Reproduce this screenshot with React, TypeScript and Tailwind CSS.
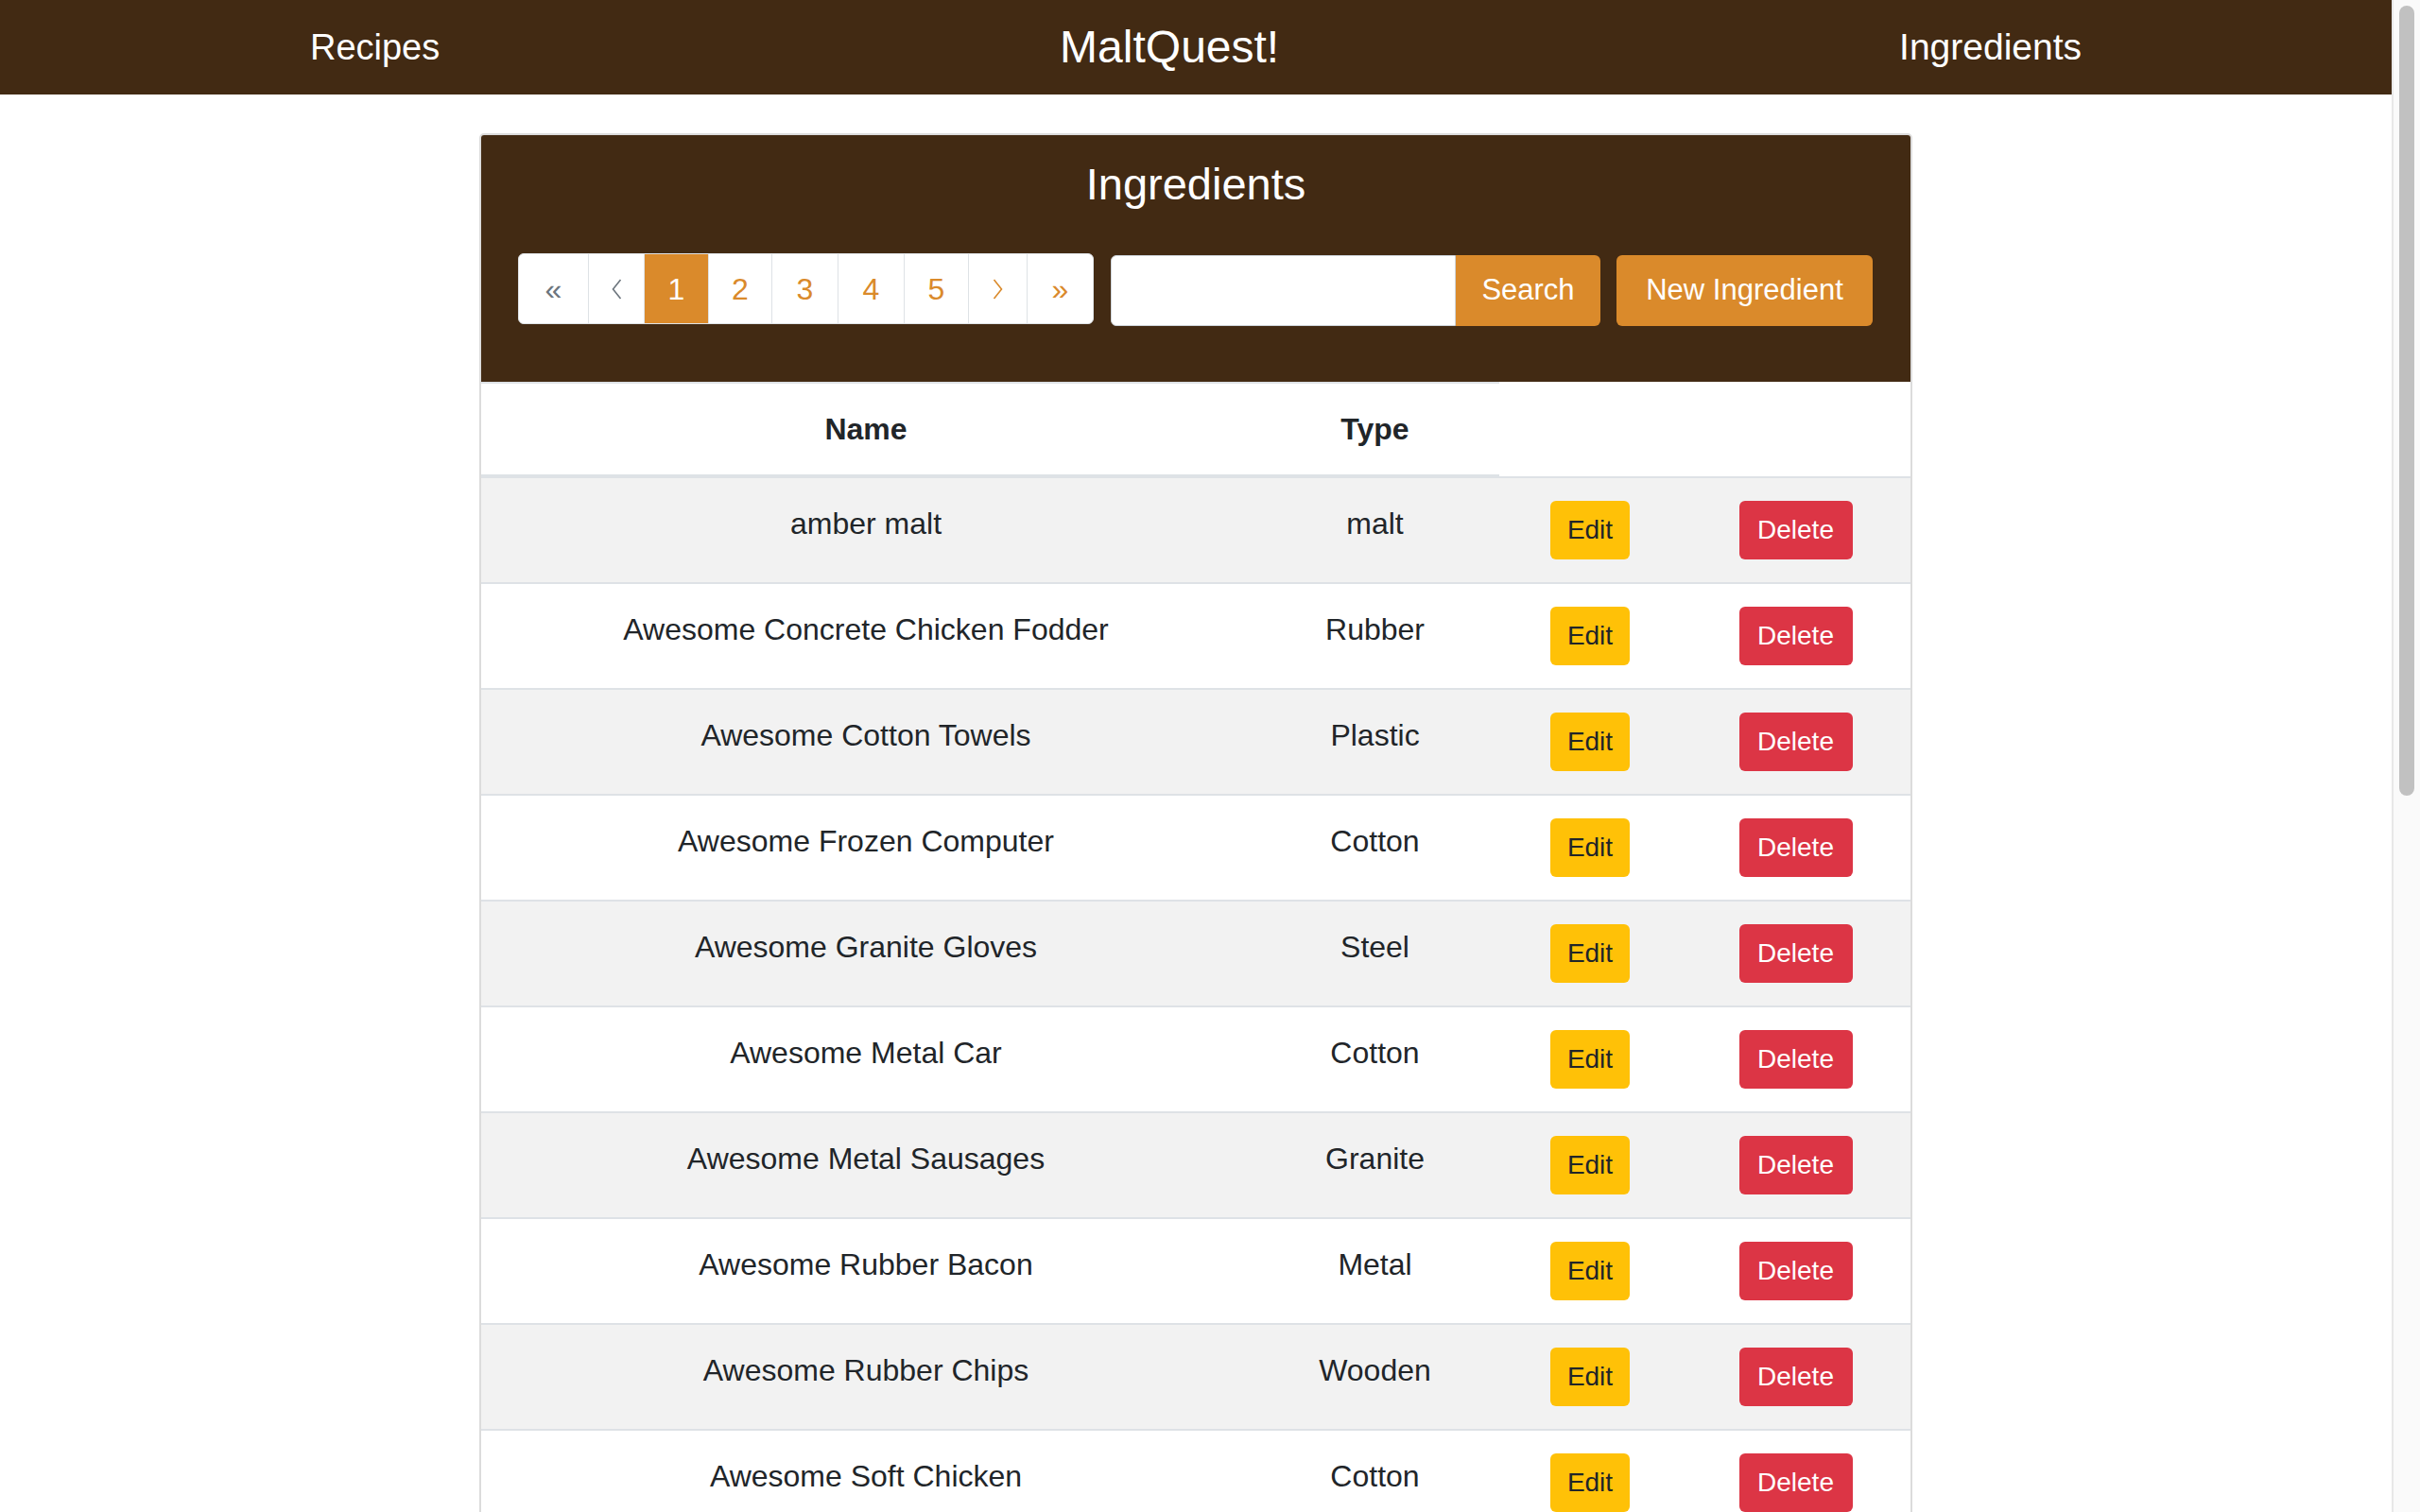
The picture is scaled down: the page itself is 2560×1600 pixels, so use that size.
import React from "react";

const rows = [
  { name: "amber malt", type: "malt" },
  { name: "Awesome Concrete Chicken Fodder", type: "Rubber" },
  { name: "Awesome Cotton Towels", type: "Plastic" },
  { name: "Awesome Frozen Computer", type: "Cotton" },
  { name: "Awesome Granite Gloves", type: "Steel" },
  { name: "Awesome Metal Car", type: "Cotton" },
  { name: "Awesome Metal Sausages", type: "Granite" },
  { name: "Awesome Rubber Bacon", type: "Metal" },
  { name: "Awesome Rubber Chips", type: "Wooden" },
  { name: "Awesome Soft Chicken", type: "Cotton" },
];

const Angle = ({ dir, color }: { dir: "left" | "right"; color: string }) => (
  <svg width="11" height="22" viewBox="0 0 11 22" fill="none">
    <polyline
      points={dir === "left" ? "9.5,1 1.5,11 9.5,21" : "1.5,1 9.5,11 1.5,21"}
      stroke={color}
      strokeWidth="1.6"
    />
  </svg>
);

const Pagination = () => {
  const cell =
    "flex h-full items-center justify-center border-l border-[#dee2e6] first:border-l-0";
  return (
    <div className="flex h-[75px] w-[609px] shrink-0 overflow-hidden rounded-[6px] border border-[#dee2e6] bg-white text-[32px] text-[#da8a2b]">
      <div className={`${cell} w-[73px] text-[#6c757d]`}>«</div>
      <div className={`${cell} w-[59px]`}>
        <Angle dir="left" color="#6c757d" />
      </div>
      <div className={`${cell} w-[68px] border-[#da8a2b] bg-[#da8a2b] text-white`}>1</div>
      <div className={`${cell} w-[67px]`}>2</div>
      <div className={`${cell} w-[70px]`}>3</div>
      <div className={`${cell} w-[70px]`}>4</div>
      <div className={`${cell} w-[68px]`}>5</div>
      <div className={`${cell} w-[62px]`}>
        <Angle dir="right" color="#da8a2b" />
      </div>
      <div className={`${cell} flex-1`}>»</div>
    </div>
  );
};

export default function App() {
  return (
    <div className="flex h-screen overflow-hidden bg-white font-['Liberation_Sans',Arial,sans-serif] text-[#212529]">
      <div className="min-w-0 flex-1 overflow-hidden">
        {/* Top nav */}
        <nav className="flex h-[100px] items-center justify-around bg-[#422a13] text-white">
          <a className="text-[38px]">Recipes</a>
          <a className="text-[48px]">MaltQuest!</a>
          <a className="text-[39px]">Ingredients</a>
        </nav>

        <main className="flex justify-center pt-[41px]">
          <section className="w-[1516px] shrink-0 overflow-hidden rounded-[5px] border-2 border-[#dcdcdc]">
            {/* Panel header */}
            <div className="bg-[#422a13] px-[39px] pt-[24px] pb-[59px]">
              <h2 className="text-center text-[47px] leading-[56px] font-medium text-white">
                Ingredients
              </h2>
              <div className="mt-[45px] flex items-start gap-[18px]">
                <Pagination />
                <div className="mt-[2px] flex h-[75px] w-[518px] shrink-0">
                  <input
                    className="h-full w-[365px] min-w-0 rounded-l-[6px] border border-[#ced4da] bg-white px-4 text-[30px] outline-none"
                    type="text"
                  />
                  <button className="h-full w-[153px] rounded-r-[6px] bg-[#da8a2b] text-[31px] text-white">
                    Search
                  </button>
                </div>
                <button className="mt-[2px] ml-[-1px] h-[75px] w-[271px] shrink-0 rounded-[6px] bg-[#da8a2b] text-[31px] text-white">
                  New Ingredient
                </button>
              </div>
            </div>

            {/* Table head */}
            <div className="grid grid-cols-[814px_263px_192px_243px] bg-white text-[32px]">
              <div className="flex h-[100px] items-center justify-center border-y-2 border-[#dee2e6] font-bold">
                Name
              </div>
              <div className="flex h-[100px] items-center justify-center border-y-2 border-[#dee2e6] font-bold">
                Type
              </div>
              <div className="col-span-2" />
            </div>

            {/* Table body */}
            {rows.map((r, i) => (
              <div
                key={r.name}
                className={`grid h-[112px] grid-cols-[814px_263px_192px_243px] border-t-2 border-[#dee2e6] text-[32px] ${
                  i % 2 === 0 ? "bg-[#f2f2f2]" : "bg-white"
                }`}
              >
                <div className="flex items-center justify-center pb-[14px]">{r.name}</div>
                <div className="flex items-center justify-center pb-[14px]">{r.type}</div>
                <div className="flex items-center justify-center">
                  <button className="h-[62px] w-[84px] rounded-[6px] bg-[#ffc107] text-[28px] text-[#212529]">
                    Edit
                  </button>
                </div>
                <div className="flex items-center justify-center">
                  <button className="h-[62px] w-[120px] rounded-[6px] bg-[#dc3545] text-[28px] text-white">
                    Delete
                  </button>
                </div>
              </div>
            ))}
          </section>
        </main>
      </div>

      {/* Page scrollbar */}
      <div className="w-[30px] shrink-0 border-l-2 border-[#e8e8e8] bg-[#fafafa] pt-[6px] pl-[6px]">
        <div className="h-[836px] w-[16px] rounded-full bg-[#c1c1c1]" />
      </div>
    </div>
  );
}
